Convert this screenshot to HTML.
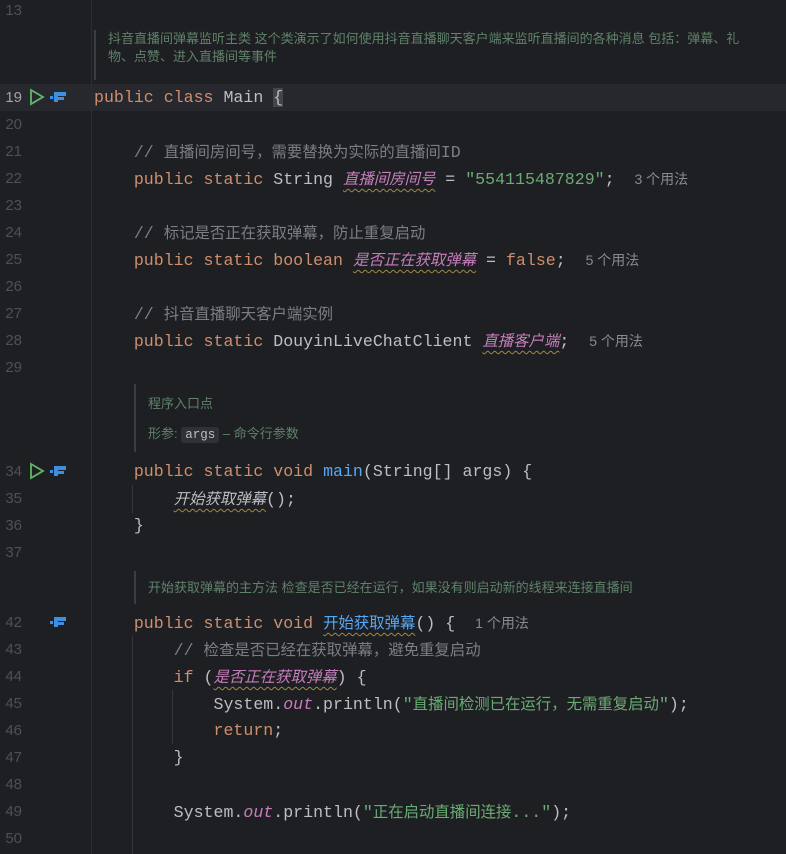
<!DOCTYPE html>
<html><head><meta charset="utf-8"><style>
body{margin:0;width:786px;height:854px;background:#1e1f22;overflow:hidden;position:relative;font-family:"Liberation Mono","Noto Sans CJK SC",monospace;}
.ln{position:absolute;left:0;width:22px;text-align:right;font-size:15px;color:#4b5059;line-height:27px;height:27px;font-family:"Liberation Sans",sans-serif}
.l{position:absolute;left:94px;font-size:16.6px;line-height:27px;height:27px;color:#bcbec4;white-space:pre}
.c{font-family:"Noto Sans CJK SC",sans-serif;font-size:15.4px}
.k{color:#cf8e6d}.cm{color:#7a7e85}.s{color:#6aab73}.m{color:#56a8f5}
.f{color:#c77dbb;font-style:italic}
.w{text-decoration:underline wavy #9b8a45;text-decoration-thickness:1px;text-underline-offset:4px}
.h{color:#868a91;font-family:"Liberation Sans","Noto Sans CJK SC",sans-serif;font-size:14px}
.doc{position:absolute;color:#5f826b;font-family:"Liberation Sans","Noto Sans CJK SC",sans-serif;font-size:13px;border-left:2px solid #3a3d41}
.sep{position:absolute;left:91px;top:0;width:1px;height:854px;background:#2b2d30}
.g{position:absolute;width:1px;background:#34363b}
.ic{position:absolute}
</style></head><body>
<div style="position:absolute;left:0;top:84px;width:786px;height:27px;background:#26282e"></div>
<div class="sep"></div>
<div class="g" style="left:132px;top:485px;height:28px"></div>
<div class="g" style="left:132px;top:636px;height:218px"></div>
<div class="g" style="left:172px;top:690px;height:54px"></div>

<div class="ln" style="top:-3px">13</div>
<div class="doc" style="left:94px;top:30px;height:50px;padding-left:12px;line-height:18px;width:660px">抖音直播间弹幕监听主类 这个类演示了如何使用抖音直播聊天客户端来监听直播间的各种消息 包括：弹幕、礼<br>物、点赞、进入直播间等事件</div>

<div class="ln" style="top:84px;color:#a1a3ab">19</div>
<svg class="ic" style="left:28px;top:88px" width="20" height="18"><path d="M3 2 L15 9 L3 16 Z" fill="none" stroke="#5fb865" stroke-width="1.8"/></svg>
<svg class="ic" style="left:50px;top:90px" width="18" height="14"><rect x="0" y="6" width="3" height="3" fill="#3d8fe0"/><rect x="4" y="2" width="12" height="4" fill="#3d8fe0"/><rect x="4" y="6" width="4" height="6" fill="#3d8fe0"/><rect x="8" y="7" width="6" height="3" fill="#3d8fe0"/></svg>
<div class="l" style="top:84px"><span class="k">public class</span> Main <span style="background:#43454a">{</span></div>

<div class="ln" style="top:111px">20</div>
<div class="ln" style="top:138px">21</div>
<div class="l" style="top:138px"><span class="cm">    // <span class="c">直播间房间号，需要替换为实际的直播间</span>ID</span></div>
<div class="ln" style="top:165px">22</div>
<div class="l" style="top:165px">    <span class="k">public static</span> String <span class="f w c">直播间房间号</span> = <span class="s">"554115487829"</span>;  <span class="h">3 个用法</span></div>
<div class="ln" style="top:192px">23</div>
<div class="ln" style="top:219px">24</div>
<div class="l" style="top:219px"><span class="cm">    // <span class="c">标记是否正在获取弹幕，防止重复启动</span></span></div>
<div class="ln" style="top:246px">25</div>
<div class="l" style="top:246px">    <span class="k">public static boolean</span> <span class="f w c">是否正在获取弹幕</span> = <span class="k">false</span>;  <span class="h">5 个用法</span></div>
<div class="ln" style="top:273px">26</div>
<div class="ln" style="top:300px">27</div>
<div class="l" style="top:300px"><span class="cm">    // <span class="c">抖音直播聊天客户端实例</span></span></div>
<div class="ln" style="top:327px">28</div>
<div class="l" style="top:327px">    <span class="k">public static</span> DouyinLiveChatClient <span class="f w c">直播客户端</span>;  <span class="h">5 个用法</span></div>
<div class="ln" style="top:354px">29</div>

<div class="doc" style="left:134px;top:384px;height:68px;padding-left:12px;width:400px">
<div style="position:absolute;left:12px;top:9px;white-space:nowrap">程序入口点</div>
<div style="position:absolute;left:12px;top:39px;white-space:nowrap">形参: <span style="background:#2f3135;color:#bcbec4;font-family:'Liberation Mono',monospace;font-size:12.5px;padding:1px 4px;border-radius:3px">args</span> – 命令行参数</div>
</div>

<div class="ln" style="top:458px">34</div>
<svg class="ic" style="left:28px;top:462px" width="20" height="18"><path d="M3 2 L15 9 L3 16 Z" fill="none" stroke="#5fb865" stroke-width="1.8"/></svg>
<svg class="ic" style="left:50px;top:464px" width="18" height="14"><rect x="0" y="6" width="3" height="3" fill="#3d8fe0"/><rect x="4" y="2" width="12" height="4" fill="#3d8fe0"/><rect x="4" y="6" width="4" height="6" fill="#3d8fe0"/><rect x="8" y="7" width="6" height="3" fill="#3d8fe0"/></svg>
<div class="l" style="top:458px">    <span class="k">public static void</span> <span class="m">main</span>(String[] args) {</div>
<div class="ln" style="top:485px">35</div>
<div class="l" style="top:485px">        <span class="c w" style="font-style:italic">开始获取弹幕</span>();</div>
<div class="ln" style="top:512px">36</div>
<div class="l" style="top:512px">    }</div>
<div class="ln" style="top:539px">37</div>

<div class="doc" style="left:134px;top:571px;height:33px;padding-left:12px;width:620px;line-height:33px;white-space:nowrap">开始获取弹幕的主方法 检查是否已经在运行，如果没有则启动新的线程来连接直播间</div>

<div class="ln" style="top:609px">42</div>
<svg class="ic" style="left:50px;top:615px" width="18" height="14"><rect x="0" y="6" width="3" height="3" fill="#3d8fe0"/><rect x="4" y="2" width="12" height="4" fill="#3d8fe0"/><rect x="4" y="6" width="4" height="6" fill="#3d8fe0"/><rect x="8" y="7" width="6" height="3" fill="#3d8fe0"/></svg>
<div class="l" style="top:609px">    <span class="k">public static void</span> <span class="m c w">开始获取弹幕</span>() {  <span class="h">1 个用法</span></div>
<div class="ln" style="top:636px">43</div>
<div class="l" style="top:636px"><span class="cm">        // <span class="c">检查是否已经在获取弹幕，避免重复启动</span></span></div>
<div class="ln" style="top:663px">44</div>
<div class="l" style="top:663px">        <span class="k">if</span> (<span class="f w c">是否正在获取弹幕</span>) {</div>
<div class="ln" style="top:690px">45</div>
<div class="l" style="top:690px">            System.<span class="f">out</span>.println(<span class="s">"<span class="c">直播间检测已在运行，无需重复启动</span>"</span>);</div>
<div class="ln" style="top:717px">46</div>
<div class="l" style="top:717px">            <span class="k">return</span>;</div>
<div class="ln" style="top:744px">47</div>
<div class="l" style="top:744px">        }</div>
<div class="ln" style="top:771px">48</div>
<div class="ln" style="top:798px">49</div>
<div class="l" style="top:798px">        System.<span class="f">out</span>.println(<span class="s">"<span class="c">正在启动直播间连接</span>..."</span>);</div>
<div class="ln" style="top:825px">50</div>
</body></html>
